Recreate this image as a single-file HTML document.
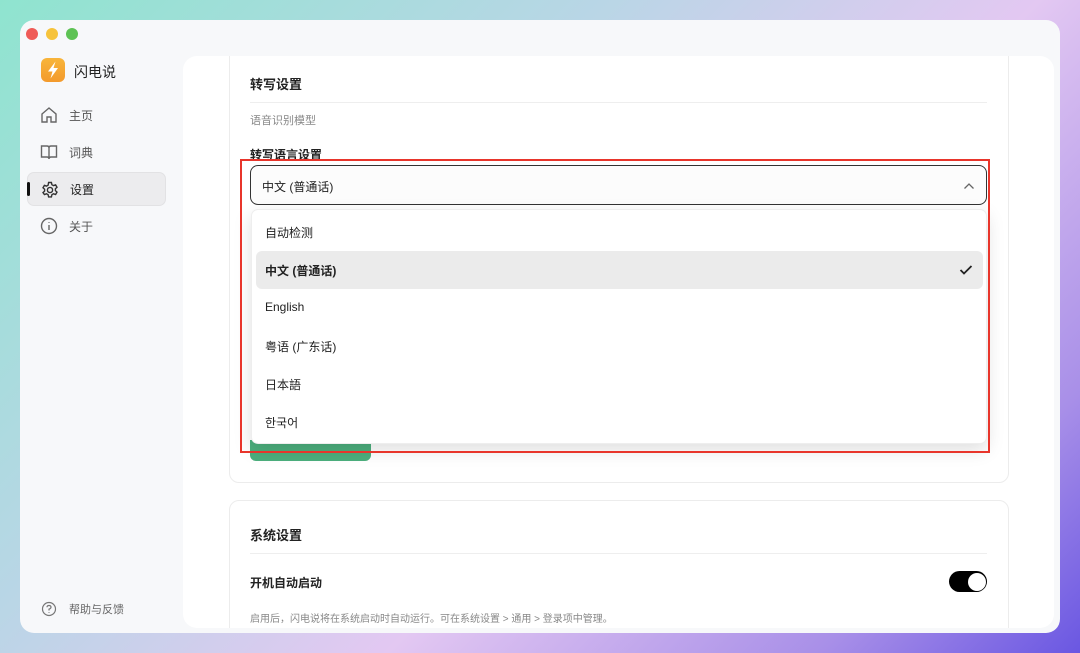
<!DOCTYPE html>
<html><head><meta charset="utf-8"><style>
*{box-sizing:border-box;margin:0;padding:0}
body{width:1080px;height:653px;overflow:hidden;font-family:"Liberation Sans","Noto Sans CJK SC",sans-serif;background:linear-gradient(135deg,#8fe4cf 0%,#b9d6e6 35%,#e3c8f2 60%,#a88fe8 85%,#6a57e2 100%);position:relative}
.win{position:absolute;left:20px;top:20px;width:1040px;height:613px;border-radius:14px;background:#f7f8fa;overflow:hidden}
.dot{position:absolute;top:8px;width:12px;height:12px;border-radius:50%}
.side{position:absolute;left:0;top:0;width:163px;height:100%}
.logo{position:absolute;left:21px;top:38px;width:24px;height:24px;border-radius:6px;background:linear-gradient(#f8b53a,#f39a2c)}
.nav{position:absolute;left:7px;width:139px;height:34px;border-radius:7px;font-size:12px;color:#555;display:flex;align-items:center;padding-left:42px}
.nav svg{position:absolute;left:13px;top:8px}
.panel{position:absolute;left:163px;top:36px;width:871px;height:572px;background:#fff;border-radius:14px;overflow:hidden}
.card{position:absolute;left:46px;width:780px;border:1px solid #ececec;border-radius:10px;background:#fff}
.t{position:absolute;font-size:13px;color:#222}
.redbox{position:absolute;left:240px;top:159px;width:750px;height:294px;border:2px solid #e8352b}
.sel{position:absolute;left:250px;top:165px;width:737px;height:40px;border:1px solid #333;border-radius:8px;background:#fcfcfc;font-size:12px;padding:12px 0 0 11px;color:#222}
.menu{position:absolute;left:251px;top:209px;width:736px;height:235px;background:#fff;border-radius:7px;box-shadow:0 6px 18px rgba(0,0,0,.13);border:1px solid #eee}
.it{position:absolute;left:4px;width:727px;height:38px;border-radius:6px;font-size:12px;color:#222;padding:11px 0 0 9px}
</style></head><body>
<div class="win">
 <div class="dot" style="left:6px;background:#ef5b57"></div>
 <div class="dot" style="left:26px;background:#f6c33b"></div>
 <div class="dot" style="left:46px;background:#5dc254"></div>
 <div class="side">
  <div class="logo"><svg width="24" height="24" viewBox="0 0 24 24"><path d="M14.5 3.5 L7 13.5 H11.5 L9.5 20.5 L17 10 H12.5 Z" fill="#fff"/></svg></div>
  <div style="position:absolute;left:54px;top:42px;font-size:14px;color:#222">闪电说</div>
  <div class="nav" style="top:78px"><svg width="18" height="18" viewBox="0 0 18 18" fill="none" stroke="#666" stroke-width="1.4"><path d="M2 8 L9 2 L16 8 V16 H11 V11 H7 V16 H2 Z"/></svg>主页</div>
  <div class="nav" style="top:115px"><svg width="18" height="18" viewBox="0 0 18 18" fill="none" stroke="#666" stroke-width="1.4"><path d="M1.5 3 H7 Q9 3 9 5 V16 Q9 14 7 14 H1.5 Z M16.5 3 H11 Q9 3 9 5 V16 Q9 14 11 14 H16.5 Z"/></svg>词典</div>
  <div class="nav" style="top:152px;background:#ececee;border:1px solid #e2e2e4;color:#222"><svg width="18" height="18" viewBox="0 0 18 18" fill="none" stroke="#333" stroke-width="1.4"><circle cx="9" cy="9" r="2.6"/><path d="M7.6 1.5h2.8l.5 2.2 1.6.9 2.1-.7 1.4 2.4-1.6 1.5v1.8l1.6 1.5-1.4 2.4-2.1-.7-1.6.9-.5 2.2H7.6l-.5-2.2-1.6-.9-2.1.7L2 11.6l1.6-1.5V8.3L2 6.8l1.4-2.4 2.1.7 1.6-.9z"/></svg>设置</div>
  <div style="position:absolute;left:7px;top:162px;width:3px;height:14px;background:#111;border-radius:2px"></div>
  <div class="nav" style="top:189px"><svg width="18" height="18" viewBox="0 0 18 18" fill="none" stroke="#666" stroke-width="1.4"><circle cx="9" cy="9" r="7.5"/><path d="M9 8 V13 M9 5 V5.8"/></svg>关于</div>
  <div class="nav" style="top:572px;font-size:11px;color:#666"><svg width="16" height="16" viewBox="0 0 16 16" fill="none" stroke="#777" stroke-width="1.2" style="left:14px;top:9px"><circle cx="8" cy="8" r="6.5"/><path d="M6 6.3 Q6 4.5 8 4.5 Q10 4.5 10 6.2 Q10 7.3 8 8.2 V9.5 M8 11 V11.8"/></svg>帮助与反馈</div>
 </div>
 <div class="panel">
  <div class="card" style="top:-20px;height:447px"></div>
  <div class="card" style="top:444px;height:160px"></div>
  <div style="position:absolute;left:67px;top:384px;width:121px;height:21px;background:#4caf7d;border-radius:0 0 6px 6px"></div>
 </div>
</div>
<div class="t" style="left:250px;top:74px;font-weight:bold">转写设置</div>
<div style="position:absolute;left:250px;top:102px;width:737px;height:1px;background:#eee"></div>
<div class="t" style="left:250px;top:112px;font-size:11px;color:#888">语音识别模型</div>
<div class="t" style="left:250px;top:146px;font-size:12px;font-weight:bold">转写语言设置</div>
<div class="sel">中文 (普通话)<svg width="12" height="8" viewBox="0 0 12 8" style="position:absolute;right:11px;top:16px" fill="none" stroke="#666" stroke-width="1.3"><path d="M1.5 6.5 L6 2 L10.5 6.5"/></svg></div>
<div class="menu">
 <div class="it" style="top:3px">自动检测</div>
 <div class="it" style="top:41px;background:#ebebeb;font-weight:bold">中文 (普通话)<svg width="14" height="12" viewBox="0 0 14 12" style="position:absolute;right:10px;top:13px" fill="none" stroke="#222" stroke-width="1.8"><path d="M1.5 6 L5 9.5 L12.5 2"/></svg></div>
 <div class="it" style="top:79px">English</div>
 <div class="it" style="top:117px">粤语 (广东话)</div>
 <div class="it" style="top:155px">日本語</div>
 <div class="it" style="top:193px">한국어</div>
</div>
<div class="redbox"></div>
<div class="t" style="left:250px;top:525px;font-weight:bold">系统设置</div>
<div style="position:absolute;left:250px;top:553px;width:737px;height:1px;background:#eee"></div>
<div class="t" style="left:250px;top:574px;font-size:12px;font-weight:bold">开机自动启动</div>
<div class="t" style="left:250px;top:610px;font-size:10px;color:#888">启用后，闪电说将在系统启动时自动运行。可在系统设置 &gt; 通用 &gt; 登录项中管理。</div>
<div style="position:absolute;left:949px;top:571px;width:38px;height:21px;border-radius:11px;background:#000"><div style="position:absolute;right:1.5px;top:1.5px;width:18px;height:18px;border-radius:50%;background:#fff"></div></div>
</body></html>
